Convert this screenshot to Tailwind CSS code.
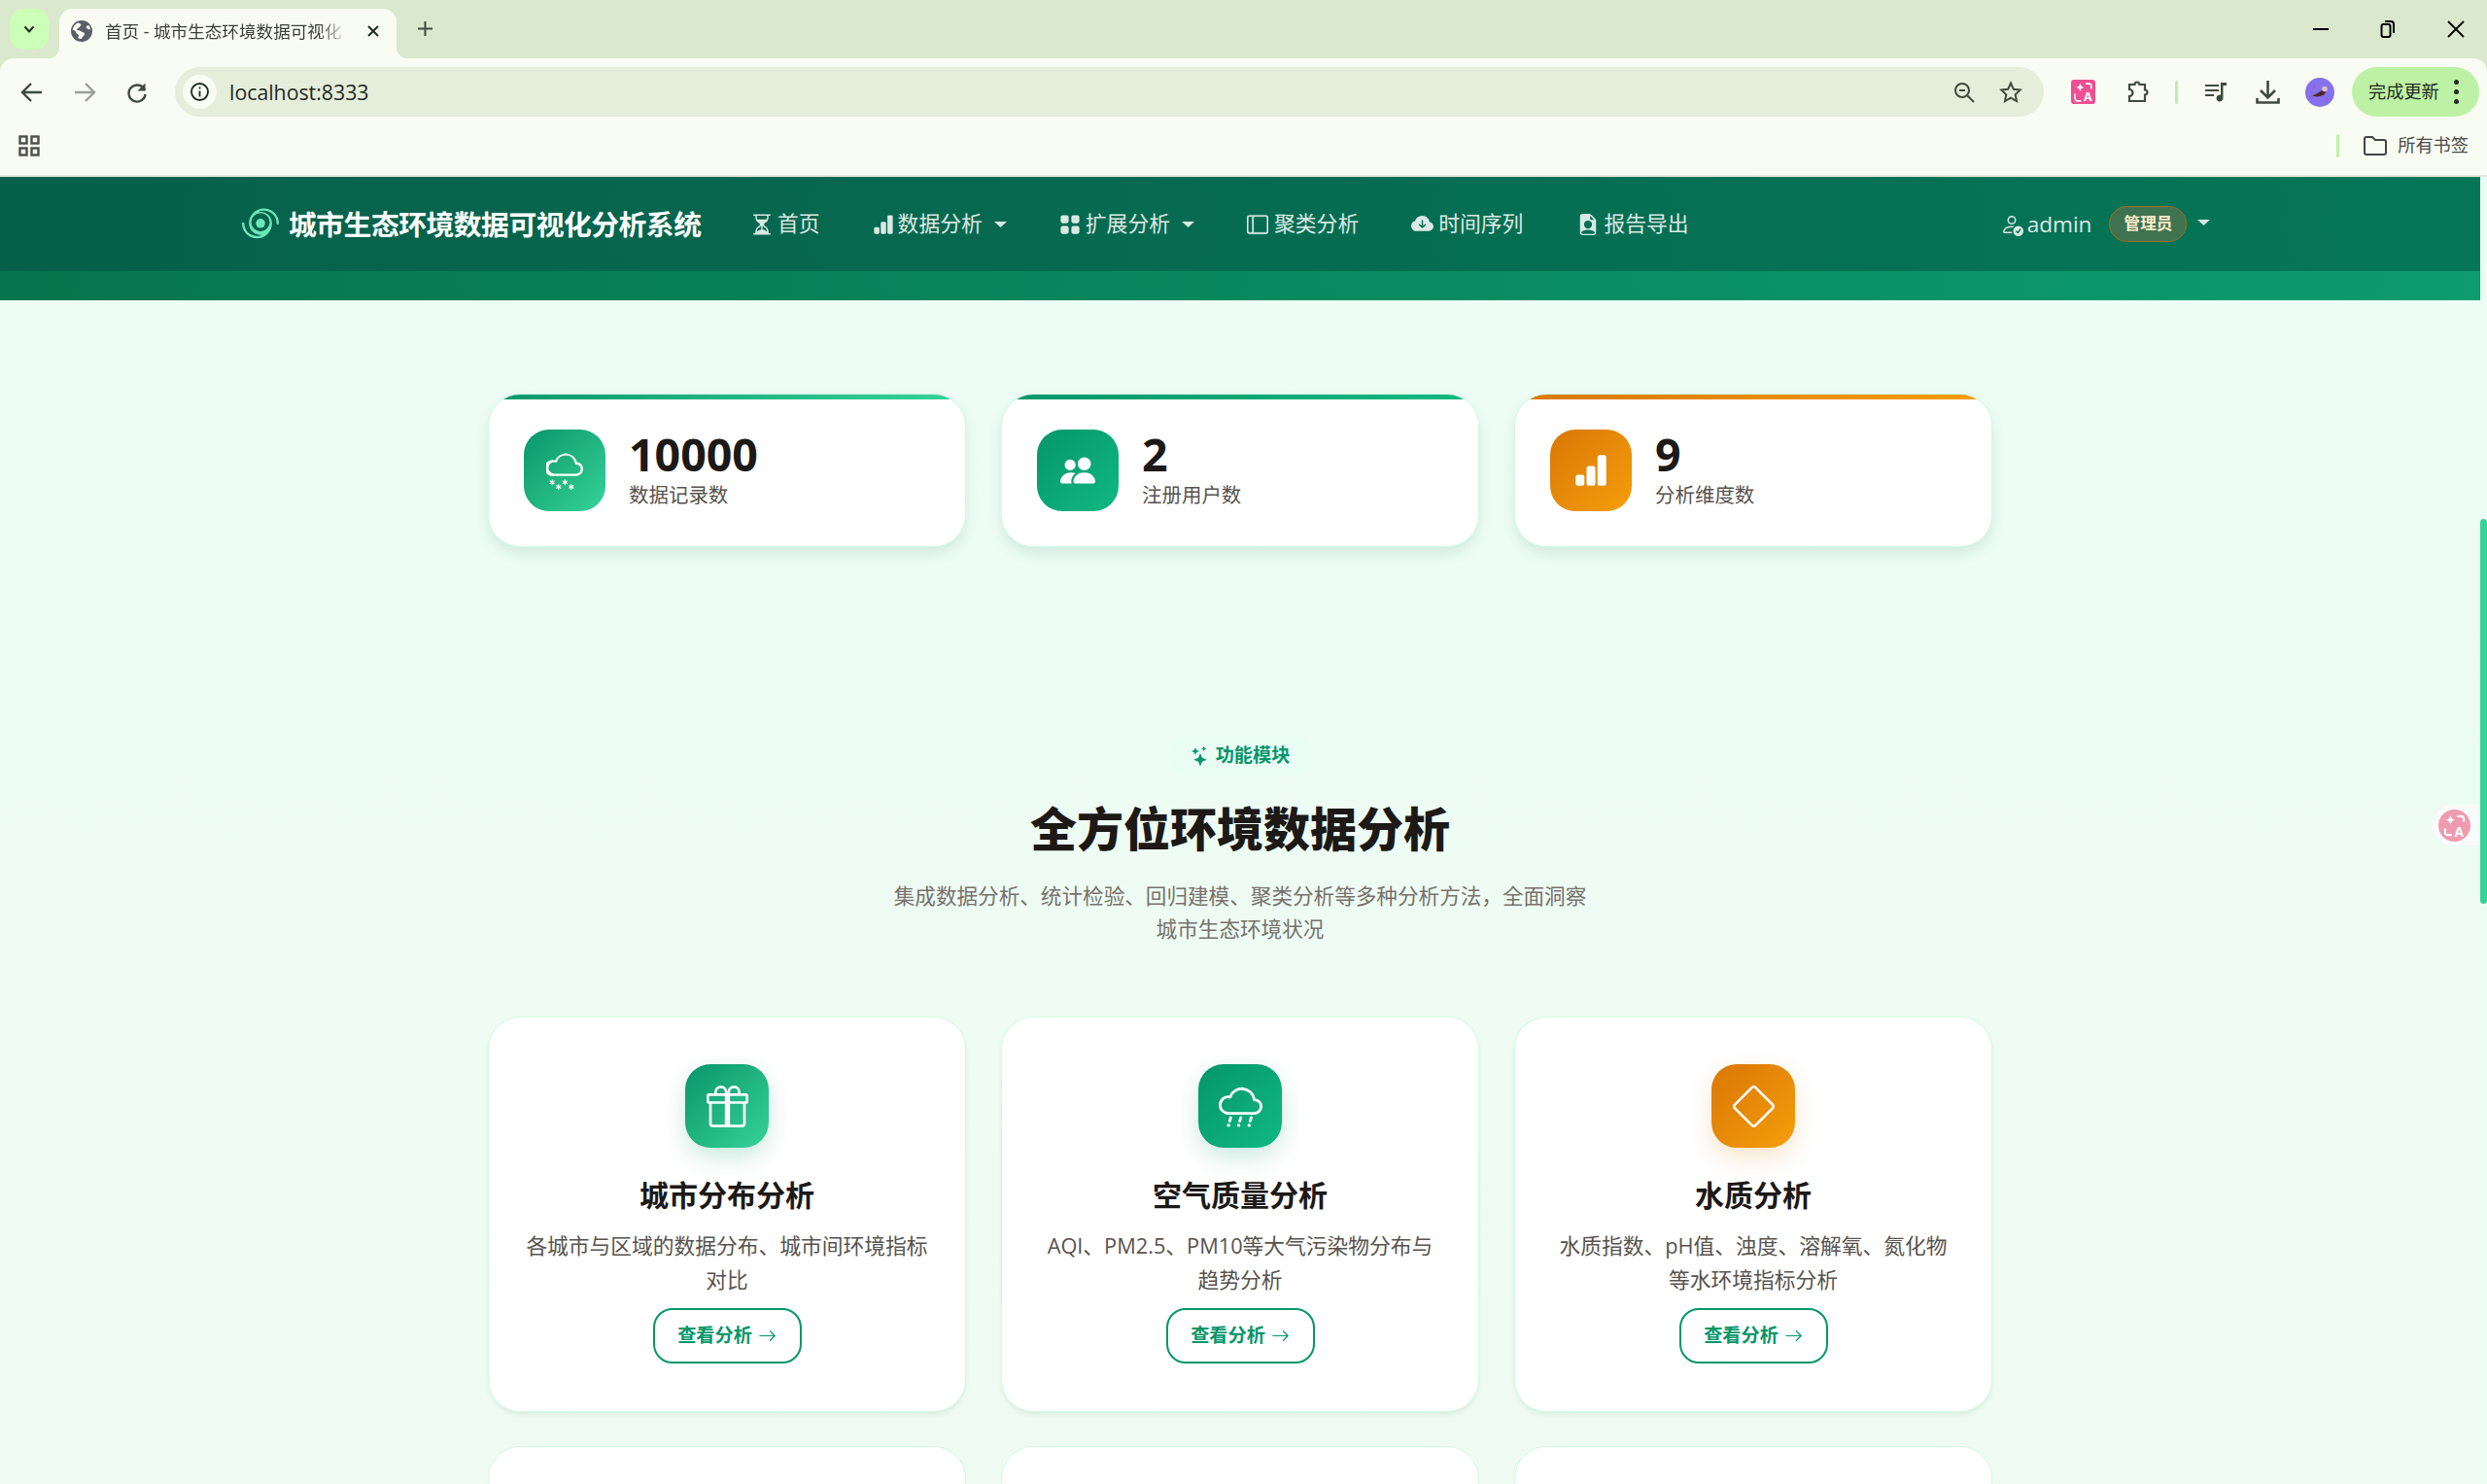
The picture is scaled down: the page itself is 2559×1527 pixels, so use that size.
<!DOCTYPE html>
<html lang="zh-CN">

<head>
    <meta charset="UTF-8" />
    <title>首页 - 城市生态环境数据可视化分析系统</title>
    <script src="https://cdn.jsdelivr.net/npm/@tailwindcss/browser@4"></script>
</head>

<body class="h-screen overflow-hidden bg-[#dae8cd] font-['Open_Sans','Noto_Sans_CJK_SC',sans-serif]">
    <!-- tab strip -->
    <div class="h-[60px] bg-[#dae8cd] flex items-start pl-[10px] pr-[23px]">
        <div class="mt-[9px] w-[40px] h-[42px] rounded-[14px] bg-[#ccffb8] flex items-center justify-center">
            <svg class="w-[14px] h-[14px]" viewBox="0 0 14 14" fill="none" stroke="#1f2a1e" stroke-width="2"><path d="M2.500 4.500 7 9.500l4.500-5" /></svg>
        </div>
        <div class="relative mt-[9px] ml-[11px] w-[347px] h-[51px] rounded-t-[14px] bg-[#f8fcf2] flex items-center pl-[12px] pb-[6px]">
            <div class="absolute bottom-0 -left-[12px] w-[12px] h-[12px] bg-[radial-gradient(circle_at_0_0,transparent_12px,#f8fcf2_12.500px)]"></div>
            <div class="absolute bottom-0 -right-[12px] w-[12px] h-[12px] bg-[radial-gradient(circle_at_100%_0,transparent_12px,#f8fcf2_12.500px)]"></div>
            <svg class="w-[22px] h-[22px]" viewBox="0 0 16 16" fill="#5a5f68"><path d="M0 8a8 8 0 1 1 16 0A8 8 0 0 1 0 8m5.500-6.300C3.300 2.600 1.700 4.600 1.200 7c1 .1 1.700.6 2.300 1.300.5.6.4 1.400 1.200 1.700.9.300 1.200 1 1 1.900l-.4 1.400c.8.400 1.700.6 2.700.6l.5-1.300c.4-.9 1.600-1.200 1.800-2.300.2-1-.9-1.500-1.800-1.600-1-.1-1.400-1-2.300-1.200-.7-.1-1.500.3-1.700-.6-.2-.8.7-1 1.300-1.300.8-.4.800-1.300 1.500-1.700.6-.4.300-1.200-.5-1.600-.4-.1-.6-.2-.8-.3m7.300 1.700c-.7.300-1.600.3-1.800 1.100-.2.700.5 1.100 1 1.500.7.400 1.300.2 1.800.600.3-1.200-.2-2.400-1-3.200" /></svg>
            <div class="ml-[13px] w-[250px] whitespace-nowrap text-[17.600px] leading-[24px] text-[#3a3f3a] [mask-image:linear-gradient(to_right,black_88%,transparent)]">首页 - 城市生态环境数据可视化</div>
            <svg class="ml-[19px] w-[14px] h-[14px]" viewBox="0 0 14 14" stroke="#1f2a1e" stroke-width="2"><path d="M2 2l10 10M12 2 2 12" /></svg>
        </div>
        <svg class="mt-[21px] ml-[21px] w-[17px] h-[17px]" viewBox="0 0 17 17" stroke="#3f4a3c" stroke-width="2"><path d="M8.500 1v15M1 8.500h15" /></svg>
        <div class="ml-auto mt-[20px] flex items-center gap-[53px]">
            <div class="w-[16px] h-[2px] bg-black"></div>
            <svg class="w-[16px] h-[20px]" viewBox="0 0 16 20" fill="none" stroke="black" stroke-width="2"><rect x="1.500" y="5" width="9" height="13" rx="2" /><path d="M5 2h6a3 3 0 0 1 3 3v9" /></svg>
            <svg class="w-[18px] h-[18px]" viewBox="0 0 18 18" stroke="black" stroke-width="1.800"><path d="M1 1l16 16M17 1 1 17" /></svg>
        </div>
    </div>

    <!-- toolbar -->
    <div class="h-[60px] pt-[9px] rounded-t-[14px] bg-[#f8fcf2] flex items-center pl-[19px] pr-[8px]">
        <svg class="w-[28px] h-[28px] shrink-0" viewBox="0 0 28 28" fill="none" stroke="#3f4a3c" stroke-width="2.400"><path d="M24 14H5M13 5l-9 9 9 9" /></svg>
        <svg class="ml-[26px] w-[28px] h-[28px] shrink-0" viewBox="0 0 28 28" fill="none" stroke="#9ba198" stroke-width="2.400"><path d="M4 14h19M15 5l9 9-9 9" /></svg>
        <svg class="ml-[26px] w-[28px] h-[28px] shrink-0" viewBox="0 0 28 28" fill="none" stroke="#3f4a3c" stroke-width="2.400"><path d="M22 12A8.500 8.500 0 1 0 22.500 16" /><path d="M22.500 4.500v8h-8z" stroke-width="0" fill="#3f4a3c" /></svg>
        <div class="ml-[25px] w-[1923px] h-[51px] shrink-0 rounded-full bg-[#e5eddb] flex items-center pl-[8px]">
            <div class="w-[35px] h-[35px] rounded-full bg-[#f8fcf2] flex items-center justify-center">
                <svg class="w-[21px] h-[21px]" viewBox="0 0 21 21" fill="none" stroke="#1f2a1e" stroke-width="1.800"><circle cx="10.500" cy="10.500" r="8.500" /><path d="M10.500 9.500v6M10.500 5.500v2" /></svg>
            </div>
            <span class="ml-[13px] text-[21.300px] text-[#1f2a1e]">localhost:8333</span>
            <svg class="ml-auto w-[24px] h-[24px]" viewBox="0 0 24 24" fill="none" stroke="#3f4a3c" stroke-width="2"><circle cx="10" cy="10" r="7" /><path d="M15 15l7 7M7 10h6" /></svg>
            <svg class="ml-[24px] mr-[22px] w-[24px] h-[24px]" viewBox="0 0 24 24" fill="none" stroke="#3f4a3c" stroke-width="2"><path d="M12 2.500l2.900 6.300 6.800.8-5 4.700 1.300 6.800-6-3.400-6 3.400 1.300-6.800-5-4.700 6.800-.8z" /></svg>
        </div>
        <svg class="ml-[28px] w-[25px] h-[25px] shrink-0" viewBox="0 0 24 24">
            <rect width="24" height="24" rx="3" fill="#ef4f93" />
            <path d="M9 3c.5 3 1.500 4 4.500 4.500-3 .5-4 1.500-4.500 4.500-.5-3-1.500-4-4.500-4.500 3-.5 4-1.500 4.500-4.500z" fill="white" />
            <path d="M14.500 4h3a2.500 2.500 0 0 1 2.500 2.500V9M4 14v4.500A2.500 2.500 0 0 0 6.500 21H10" fill="none" stroke="white" stroke-width="1.600" />
            <text x="16.500" y="21.500" font-size="12" font-weight="700" text-anchor="middle" fill="white">A</text>
        </svg>
        <svg class="ml-[30px] w-[26px] h-[26px] shrink-0" viewBox="0 0 26 26" fill="none" stroke="#3f4a3c" stroke-width="2.200"><path d="M5 5h5.500a2.500 2.500 0 0 1 5 0H21v5.500a2.500 2.500 0 0 1 0 5V22H5v-5a3.500 3.500 0 0 0 0-7z" /></svg>
        <div class="ml-[26px] w-[3px] h-[24px] shrink-0 rounded-full bg-[#bdf0a8]"></div>
        <svg class="ml-[26px] w-[26px] h-[26px] shrink-0" viewBox="0 0 26 26" fill="#3f4a3c"><path d="M2 5h14v2H2zM2 10h14v2H2zM2 15h9v2H2z" /><path d="M18 3h6v3h-3.500v13a3.500 3.500 0 1 1-2.500-3.300z" /></svg>
        <svg class="ml-[27px] w-[27px] h-[27px] shrink-0" viewBox="0 0 27 27" fill="none" stroke="#3f4a3c" stroke-width="2.600"><path d="M13.500 2v17M6 12l7.500 7.500L21 12M2.500 20v4.500h22V20" /></svg>
        <svg class="ml-[25px] w-[30px] h-[30px] shrink-0" viewBox="0 0 30 30">
            <circle cx="15" cy="15" r="15" fill="#8670ee" />
            <path d="M7 18c3 0 7-3 10-5l4 1-1 3c-3 2-8 3-11 2z" fill="#4b2a2a" />
            <circle cx="20" cy="11.500" r="2.800" fill="#d9c2b8" />
            <path d="M9 6v6M22 20v5M6 17v5" stroke="#a05fc0" stroke-width="1.200" />
        </svg>
        <div class="ml-[18px] w-[131px] h-[51px] shrink-0 rounded-full bg-[#bdf2a6] flex items-center pl-[17px]">
            <span class="text-[18.200px] text-[#1f2a1e]">完成更新</span>
            <span class="ml-[15px] flex flex-col gap-[5px]"><i class="block w-[5px] h-[5px] rounded-full bg-[#1f2a1e]"></i><i class="block w-[5px] h-[5px] rounded-full bg-[#1f2a1e]"></i><i class="block w-[5px] h-[5px] rounded-full bg-[#1f2a1e]"></i></span>
        </div>
    </div>

    <!-- bookmarks bar -->
    <div class="h-[62px] bg-[#f8fcf2] border-b-2 border-[#e6e8dc] flex items-center pl-[19px] pr-[19px]">
        <svg class="w-[22px] h-[22px]" viewBox="0 0 22 22" fill="none" stroke="#4a4f48" stroke-width="2.400"><rect x="1.500" y="1.500" width="7" height="7" /><rect x="13.500" y="1.500" width="7" height="7" /><rect x="1.500" y="13.500" width="7" height="7" /><rect x="13.500" y="13.500" width="7" height="7" /></svg>
        <div class="ml-auto w-[3px] h-[24px] rounded-full bg-[#bdf0a8]"></div>
        <svg class="ml-[25px] w-[24px] h-[20px]" viewBox="0 0 24 20" fill="none" stroke="#444" stroke-width="2"><path d="M1 3a2 2 0 0 1 2-2h6l3 3h9a2 2 0 0 1 2 2v11a2 2 0 0 1-2 2H3a2 2 0 0 1-2-2z" /></svg>
        <span class="ml-[11px] text-[18.200px] text-[#4a4a4a]">所有书签</span>
    </div>

    <div class="h-[1345px] flex bg-[#edfcf4] relative overflow-hidden">
        <main class="w-[2552px] bg-linear-to-b from-[#ecfdf5] to-[#effbf2]">
            <!-- navbar -->
            <nav class="h-[97px] bg-linear-to-r from-[#06604a] to-[#057757] flex items-center pl-[249px] text-white/85 text-[21.800px]">
                <svg class="w-[38px] h-[38px]" viewBox="0 0 16 16" fill="#6ee7b7"><path d="M8 9.500a2 2 0 1 0 0-4 2 2 0 0 0 0 4" /><path d="M9.500 2c-.9 0-1.750.216-2.501.6A5 5 0 0 1 13 7.500a6.500 6.500 0 1 1-13 0 .5.500 0 0 1 1 0 5.500 5.500 0 0 0 8.001 4.900A5 5 0 0 1 3 7.500a6.500 6.500 0 0 1 13 0 .5.500 0 0 1-1 0A5.500 5.500 0 0 0 9.500 2M8 11a4 4 0 1 0 0-8 4 4 0 0 0 0 8" /></svg>
                <span class="ml-[10px] w-[475px] text-[28.800px] font-bold text-white tracking-[-0.500px]">城市生态环境数据可视化分析系统</span>
                <svg class="w-[24px] h-[24px]" viewBox="0 0 16 16" fill="currentColor"><path d="M2.500 15a.5.500 0 1 1 0-1h1v-1a4.500 4.500 0 0 1 2.557-4.060c.29-.139.443-.377.443-.59v-.7c0-.213-.154-.451-.443-.59A4.500 4.500 0 0 1 3.500 3V2h-1a.5.500 0 0 1 0-1h11a.5.500 0 0 1 0 1h-1v1a4.500 4.500 0 0 1-2.557 4.060c-.29.139-.443.377-.443.59v.7c0 .213.154.451.443.59A4.500 4.500 0 0 1 12.500 13v1h1a.5.500 0 0 1 0 1zm2-13v1c0 .537.12 1.045.337 1.500h6.326c.216-.455.337-.963.337-1.500V2zm3 6.350c0 .701-.478 1.236-1.011 1.492A3.500 3.500 0 0 0 4.500 13s.866-1.299 3-1.480zm1 0v3.170c2.134.181 3 1.480 3 1.480a3.500 3.500 0 0 0-1.989-3.158C8.978 9.586 8.500 9.052 8.500 8.351z" /></svg>
                <span class="ml-[4px]">首页</span>
                <svg class="ml-[54px] w-[22px] h-[22px]" viewBox="0 0 16 16" fill="currentColor"><path d="M1 11a1 1 0 0 1 1-1h2a1 1 0 0 1 1 1v3a1 1 0 0 1-1 1H2a1 1 0 0 1-1-1zm5-4a1 1 0 0 1 1-1h2a1 1 0 0 1 1 1v7a1 1 0 0 1-1 1H7a1 1 0 0 1-1-1zm5-5a1 1 0 0 1 1-1h2a1 1 0 0 1 1 1v12a1 1 0 0 1-1 1h-2a1 1 0 0 1-1-1z" /></svg>
                <span class="ml-[4px]">数据分析</span>
                <svg class="ml-[12px] w-[13px] h-[6px]" viewBox="0 0 13 6" fill="currentColor"><path d="M0 0h13L6.500 6z" /></svg>
                <svg class="ml-[54px] w-[22px] h-[22px]" viewBox="0 0 16 16" fill="currentColor"><path d="M1 2.500A1.500 1.500 0 0 1 2.500 1h3A1.500 1.500 0 0 1 7 2.500v3A1.500 1.500 0 0 1 5.500 7h-3A1.500 1.500 0 0 1 1 5.500zm8 0A1.500 1.500 0 0 1 10.500 1h3A1.500 1.500 0 0 1 15 2.500v3A1.500 1.500 0 0 1 13.500 7h-3A1.500 1.500 0 0 1 9 5.500zm-8 8A1.500 1.500 0 0 1 2.500 9h3A1.500 1.500 0 0 1 7 10.500v3A1.500 1.500 0 0 1 5.500 15h-3A1.500 1.500 0 0 1 1 13.500zm8 0A1.500 1.500 0 0 1 10.500 9h3a1.500 1.500 0 0 1 1.500 1.500v3a1.500 1.500 0 0 1-1.500 1.500h-3A1.500 1.500 0 0 1 9 13.500z" /></svg>
                <span class="ml-[5px]">扩展分析</span>
                <svg class="ml-[12px] w-[13px] h-[6px]" viewBox="0 0 13 6" fill="currentColor"><path d="M0 0h13L6.500 6z" /></svg>
                <svg class="ml-[54px] w-[22px] h-[22px]" viewBox="0 0 16 16" fill="currentColor" stroke="currentColor" stroke-width="0.250"><path d="M0 3a2 2 0 0 1 2-2h12a2 2 0 0 1 2 2v10a2 2 0 0 1-2 2H2a2 2 0 0 1-2-2zm5-1v12h9a1 1 0 0 0 1-1V3a1 1 0 0 0-1-1zM4 2H2a1 1 0 0 0-1 1v10a1 1 0 0 0 1 1h2z" /></svg>
                <span class="ml-[6px]">聚类分析</span>
                <svg class="ml-[54px] w-[23px] h-[23px]" viewBox="0 0 16 16" fill="currentColor"><path d="M8 2a5.530 5.530 0 0 0-3.594 1.342c-.766.66-1.321 1.520-1.464 2.383C1.266 6.095 0 7.555 0 9.318 0 11.366 1.708 13 3.781 13h8.906C14.502 13 16 11.570 16 9.773c0-1.636-1.242-2.969-2.834-3.194C12.923 3.999 10.690 2 8 2m2.354 6.854-2 2a.5.500 0 0 1-.708 0l-2-2a.5.500 0 1 1 .708-.708L7.500 9.293V5.500a.5.500 0 0 1 1 0v3.793l1.146-1.147a.5.500 0 0 1 .708.708" /></svg>
                <span class="ml-[5px]">时间序列</span>
                <svg class="ml-[56px] w-[22px] h-[22px]" viewBox="0 0 16 16" fill="currentColor"><path d="M9.293 0H4a2 2 0 0 0-2 2v12a2 2 0 0 0 2 2h8a2 2 0 0 0 2-2V4.707A1 1 0 0 0 13.707 4L10 .293A1 1 0 0 0 9.293 0M9.500 3.500v-2l3 3h-2a1 1 0 0 1-1-1M11 8a3 3 0 1 1-6 0 3 3 0 0 1 6 0m2 5.755V14a1 1 0 0 1-1 1H4a1 1 0 0 1-1-1v-.245S4 12 8 12s5 1.755 5 1.755" /></svg>
                <span class="ml-[5px]">报告导出</span>
                <svg class="ml-[320px] w-[24px] h-[24px]" viewBox="0 0 16 16" fill="currentColor"><path d="M12.500 16a3.500 3.500 0 1 0 0-7 3.500 3.500 0 0 0 0 7m1.679-4.493-1.335 2.226a.75.75 0 0 1-1.174.144l-.774-.773a.5.500 0 0 1 .708-.708l.547.548 1.170-1.951a.5.500 0 1 1 .858.514M11 5a3 3 0 1 1-6 0 3 3 0 0 1 6 0M8 7a2 2 0 1 0 0-4 2 2 0 0 0 0 4" /><path d="M8.256 14a4.500 4.500 0 0 1-.229-1.004H3c.001-.246.154-.986.832-1.664C4.484 10.680 5.711 10 8 10q.39 0 .74.025c.226-.341.496-.65.804-.918Q8.844 9.002 8 9c-5 0-6 3-6 4s1 1 1 1z" /></svg>
                <span class="ml-[4px] text-[22.600px]">admin</span>
                <span class="ml-[18px] w-[80px] h-[37px] rounded-full bg-[#3f7350] border border-[#a86b20] flex items-center justify-center text-[16.600px] font-bold text-[#fdeccb]">管理员</span>
                <svg class="ml-[11px] -mt-[3px] w-[13px] h-[6px]" viewBox="0 0 13 6" fill="currentColor"><path d="M0 0h13L6.500 6z" /></svg>
            </nav>
            <div class="h-[30px] bg-linear-to-r from-[#06754f] to-[#0c9c6e]"></div>

            <div class="w-[1546px] mx-auto">
                <!-- stats -->
                <div class="mt-[97px] grid grid-cols-3 gap-[38px]">
                    <div class="h-[156px] rounded-[32px] bg-white shadow-[0_0_0_1px_#d1fae5,0_7px_14px_rgba(6,95,70,0.12)] overflow-hidden">
                        <div class="h-[5px] bg-linear-to-r from-[#059669] to-[#34d399]"></div>
                        <div class="flex items-center pl-[36px] pt-[31px]">
                            <div class="w-[84px] h-[84px] rounded-[26px] bg-linear-to-br from-[#059669] to-[#34d399] flex items-center justify-center">
                                <svg class="mt-[2px] w-[38px] h-[38px]" viewBox="0 0 16 16" fill="white"><path d="M13.405 4.277a5.001 5.001 0 0 0-9.499-1.004A3.500 3.500 0 1 0 3.500 10H13a3 3 0 0 0 .405-5.973M8.500 1a4 4 0 0 1 3.976 3.555.5.500 0 0 0 .5.445H13a2 2 0 0 1 0 4H3.500a2.500 2.500 0 1 1 .605-4.926.5.500 0 0 0 .596-.329A4 4 0 0 1 8.500 1M2.625 11.500a.25.25 0 0 1 .25.25v.57l.501-.287a.25.25 0 0 1 .248.434l-.495.283.495.283a.25.25 0 0 1-.248.434l-.501-.286v.569a.25.25 0 1 1-.5 0v-.57l-.501.287a.25.25 0 0 1-.248-.434l.495-.283-.495-.283a.25.25 0 0 1 .248-.434l.501.286v-.569a.25.25 0 0 1 .25-.25m2.750 2a.25.25 0 0 1 .25.25v.57l.501-.287a.25.25 0 0 1 .248.434l-.495.283.495.283a.25.25 0 0 1-.248.434l-.501-.286v.569a.25.25 0 1 1-.5 0v-.57l-.501.287a.25.25 0 0 1-.248-.434l.495-.283-.495-.283a.25.25 0 0 1 .248-.434l.501.286v-.569a.25.25 0 0 1 .25-.25m5.500 0a.25.25 0 0 1 .25.25v.57l.5-.287a.25.25 0 0 1 .25.434l-.496.283.495.283a.25.25 0 0 1-.248.434l-.5-.286v.569a.25.25 0 0 1-.5 0v-.57l-.502.287a.25.25 0 0 1-.248-.434l.495-.283-.495-.283a.25.25 0 0 1 .248-.434l.501.286v-.569a.25.25 0 0 1 .25-.25m-2.750-2a.25.25 0 0 1 .25.25v.57l.501-.287a.25.25 0 0 1 .248.434l-.495.283.495.283a.25.25 0 0 1-.248.434l-.501-.286v.569a.25.25 0 1 1-.5 0v-.57l-.501.287a.25.25 0 0 1-.248-.434l.495-.283-.495-.283a.25.25 0 0 1 .248-.434l.501.286v-.569a.25.25 0 0 1 .25-.25" /></svg>
                            </div>
                            <div class="ml-[24px]">
                                <div class="-mt-[3px] text-[46.500px] leading-[50px] font-bold text-[#1c1917]">10000</div>
                                <div class="text-[20.480px] leading-[28px] mt-[3px] text-[#57534e]">数据记录数</div>
                            </div>
                        </div>
                    </div>
                    <div class="h-[156px] rounded-[32px] bg-white shadow-[0_0_0_1px_#d1fae5,0_7px_14px_rgba(6,95,70,0.12)] overflow-hidden">
                        <div class="h-[5px] bg-linear-to-r from-[#059669] to-[#10b981]"></div>
                        <div class="flex items-center pl-[36px] pt-[31px]">
                            <div class="w-[84px] h-[84px] rounded-[26px] bg-linear-to-br from-[#059669] to-[#10b981] flex items-center justify-center">
                                <svg class="w-[36px] h-[36px]" viewBox="0 0 16 16" fill="white"><path d="M7 14s-1 0-1-1 1-4 5-4 5 3 5 4-1 1-1 1zm4-6a3 3 0 1 0 0-6 3 3 0 0 0 0 6m-5.784 6A2.240 2.240 0 0 1 5 13c0-1.355.68-2.750 1.936-3.720A6.300 6.300 0 0 0 5 9c-4 0-5 3-5 4s1 1 1 1zM4.500 8a2.500 2.500 0 1 0 0-5 2.500 2.500 0 0 0 0 5" /></svg>
                            </div>
                            <div class="ml-[24px]">
                                <div class="-mt-[3px] text-[46.500px] leading-[50px] font-bold text-[#1c1917]">2</div>
                                <div class="text-[20.480px] leading-[28px] mt-[3px] text-[#57534e]">注册用户数</div>
                            </div>
                        </div>
                    </div>
                    <div class="h-[156px] rounded-[32px] bg-white shadow-[0_0_0_1px_#d1fae5,0_7px_14px_rgba(6,95,70,0.12)] overflow-hidden">
                        <div class="h-[5px] bg-linear-to-r from-[#d97706] to-[#f59e0b]"></div>
                        <div class="flex items-center pl-[36px] pt-[31px]">
                            <div class="w-[84px] h-[84px] rounded-[26px] bg-linear-to-br from-[#d97706] to-[#f59e0b] flex items-center justify-center">
                                <svg class="w-[36px] h-[36px]" viewBox="0 0 16 16" fill="white"><path d="M1 11a1 1 0 0 1 1-1h2a1 1 0 0 1 1 1v3a1 1 0 0 1-1 1H2a1 1 0 0 1-1-1zm5-4a1 1 0 0 1 1-1h2a1 1 0 0 1 1 1v7a1 1 0 0 1-1 1H7a1 1 0 0 1-1-1zm5-5a1 1 0 0 1 1-1h2a1 1 0 0 1 1 1v12a1 1 0 0 1-1 1h-2a1 1 0 0 1-1-1z" /></svg>
                            </div>
                            <div class="ml-[24px]">
                                <div class="-mt-[3px] text-[46.500px] leading-[50px] font-bold text-[#1c1917]">9</div>
                                <div class="text-[20.480px] leading-[28px] mt-[3px] text-[#57534e]">分析维度数</div>
                            </div>
                        </div>
                    </div>
                </div>

                <!-- section header -->
                <div class="mt-[195px] flex flex-col items-center">
                    <div class="h-[41px] w-[149px] rounded-full bg-[#e9fdf5] flex items-center justify-center gap-[6px]">
                        <svg class="w-[20px] h-[20px]" viewBox="0 0 16 16" fill="#059669"><path d="M7.657 6.247c.11-.33.576-.33.686 0l.645 1.937a2.890 2.890 0 0 0 1.829 1.828l1.936.645c.33.11.33.576 0 .686l-1.937.645a2.890 2.890 0 0 0-1.828 1.829l-.645 1.936a.361.361 0 0 1-.686 0l-.645-1.937a2.890 2.890 0 0 0-1.828-1.828l-1.937-.645a.361.361 0 0 1 0-.686l1.937-.645a2.890 2.890 0 0 0 1.828-1.828zM3.794 1.148a.217.217 0 0 1 .412 0l.387 1.162c.173.518.579.924 1.097 1.097l1.162.387a.217.217 0 0 1 0 .412l-1.162.387A1.730 1.730 0 0 0 4.593 5.690l-.387 1.162a.217.217 0 0 1-.412 0L3.407 5.690A1.730 1.730 0 0 0 2.310 4.593l-1.162-.387a.217.217 0 0 1 0-.412l1.162-.387A1.730 1.730 0 0 0 3.407 2.310zM10.863.099a.145.145 0 0 1 .274 0l.258.774c.115.346.386.617.732.732l.774.258a.145.145 0 0 1 0 .274l-.774.258a1.160 1.160 0 0 0-.732.732l-.258.774a.145.145 0 0 1-.274 0l-.258-.774a1.160 1.160 0 0 0-.732-.732L9.100 2.137a.145.145 0 0 1 0-.274l.774-.258c.346-.115.617-.386.732-.732z" /></svg>
                        <span class="text-[19.200px] font-bold text-[#059669]">功能模块</span>
                    </div>
                    <h2 class="mt-[25px] text-[48px] leading-[60px] font-extrabold text-[#1c1917]">全方位环境数据分析</h2>
                    <p class="mt-[22px] w-[730px] text-center text-[21.600px] leading-[34px] text-[#78716c]">集成数据分析、统计检验、回归建模、聚类分析等多种分析方法，全面洞察城市生态环境状况</p>
                </div>

                <!-- feature cards -->
                <div class="mt-[74px] grid grid-cols-3 gap-[37px_38px]">
                    <div class="h-[405px] rounded-[32px] bg-white shadow-[0_0_0_1px_#d1fae5,0_3px_5px_rgba(6,95,70,0.10)] px-[38px] pt-[48px] flex flex-col items-center">
                        <div class="w-[86px] h-[86px] rounded-[26px] bg-linear-to-br from-[#059669] to-[#34d399] shadow-[0_10px_24px_rgba(5,150,105,0.20)] flex items-center justify-center">
                            <svg class="w-[43px] h-[43px]" viewBox="0 0 16 16" fill="white"><path d="M3 2.500a2.500 2.500 0 0 1 5 0 2.500 2.500 0 0 1 5 0v.006c0 .07 0 .27-.038.494H15a1 1 0 0 1 1 1v2a1 1 0 0 1-1 1v7.500a1.500 1.500 0 0 1-1.500 1.500h-11A1.500 1.500 0 0 1 1 14.500V7a1 1 0 0 1-1-1V4a1 1 0 0 1 1-1h2.038A3 3 0 0 1 3 2.506zm1.068.5H7v-.5a1.500 1.500 0 1 0-3 0c0 .085.002.274.045.43zM9 3h2.932l.023-.07c.043-.156.045-.345.045-.43a1.500 1.500 0 0 0-3 0zM1 4v2h6V4zm8 0v2h6V4zm5 3H9v8h4.500a.5.500 0 0 0 .5-.5zm-7 8V7H2v7.500a.5.500 0 0 0 .5.5z" /></svg>
                        </div>
                        <h3 class="mt-[29px] text-[30px] leading-[40px] font-bold text-[#1c1917]">城市分布分析</h3>
                        <p class="mt-[14px] text-center text-[21.760px] leading-[35px] text-[#57534e]">各城市与区域的数据分布、城市间环境指标对比</p>
                        <a class="mt-[12px] w-[153px] h-[57px] rounded-[20px] border-2 border-[#059669] flex items-center justify-center gap-[6px] text-[19.200px] font-bold text-[#059669]">查看分析<svg class="w-[19px] h-[19px]" viewBox="0 0 16 16" fill="currentColor"><path d="M1 8a.5.500 0 0 1 .5-.5h11.793l-3.147-3.146a.5.500 0 0 1 .708-.708l4 4a.5.500 0 0 1 0 .708l-4 4a.5.500 0 0 1-.708-.708L13.293 8.500H1.500A.5.500 0 0 1 1 8" /></svg></a>
                    </div>
                    <div class="h-[405px] rounded-[32px] bg-white shadow-[0_0_0_1px_#d1fae5,0_3px_5px_rgba(6,95,70,0.10)] px-[38px] pt-[48px] flex flex-col items-center">
                        <div class="w-[86px] h-[86px] rounded-[26px] bg-linear-to-br from-[#059669] to-[#10b981] shadow-[0_10px_24px_rgba(5,150,105,0.20)] flex items-center justify-center">
                            <svg class="w-[45px] h-[45px]" viewBox="0 0 16 16" fill="white">
                                <path d="M13.405 5.027a5.001 5.001 0 0 0-9.499-1.004A3.500 3.500 0 1 0 3.500 11H13a3 3 0 0 0 .405-5.973M8.500 2a4 4 0 0 1 3.976 3.555.5.500 0 0 0 .5.445H13a2 2 0 0 1 0 4H3.500a2.500 2.500 0 1 1 .605-4.926.5.500 0 0 0 .596-.329A4 4 0 0 1 8.500 2" />
                                <path d="M4.400 12.100 4 13.400M8.100 12.100 7.700 13.400M11.900 12.100 11.500 13.400" stroke="white" stroke-width="1" stroke-linecap="round" />
                                <circle cx="3.600" cy="14.900" r=".6" /><circle cx="7.300" cy="14.900" r=".6" /><circle cx="11.100" cy="14.900" r=".6" />
                            </svg>
                        </div>
                        <h3 class="mt-[29px] text-[30px] leading-[40px] font-bold text-[#1c1917]">空气质量分析</h3>
                        <p class="mt-[14px] text-center text-[21.760px] leading-[35px] text-[#57534e]">AQI、PM2.5、PM10等大气污染物分布与趋势分析</p>
                        <a class="mt-[12px] w-[153px] h-[57px] rounded-[20px] border-2 border-[#059669] flex items-center justify-center gap-[6px] text-[19.200px] font-bold text-[#059669]">查看分析<svg class="w-[19px] h-[19px]" viewBox="0 0 16 16" fill="currentColor"><path d="M1 8a.5.500 0 0 1 .5-.5h11.793l-3.147-3.146a.5.500 0 0 1 .708-.708l4 4a.5.500 0 0 1 0 .708l-4 4a.5.500 0 0 1-.708-.708L13.293 8.500H1.500A.5.500 0 0 1 1 8" /></svg></a>
                    </div>
                    <div class="h-[405px] rounded-[32px] bg-white shadow-[0_0_0_1px_#d1fae5,0_3px_5px_rgba(6,95,70,0.10)] px-[38px] pt-[48px] flex flex-col items-center">
                        <div class="w-[86px] h-[86px] rounded-[26px] bg-linear-to-br from-[#d97706] to-[#f59e0b] shadow-[0_10px_24px_rgba(217,119,6,0.20)] flex items-center justify-center">
                            <svg class="w-[43px] h-[43px]" viewBox="0 0 16 16" fill="white"><path d="M6.950.435c.58-.58 1.520-.58 2.100 0l6.515 6.516c.58.58.58 1.519 0 2.098L9.050 15.565c-.58.58-1.519.58-2.098 0L.435 9.050a1.480 1.480 0 0 1 0-2.098zm1.400.7a.5.500 0 0 0-.7 0L1.134 7.650a.5.500 0 0 0 0 .7l6.516 6.516a.5.500 0 0 0 .7 0l6.516-6.516a.5.500 0 0 0 0-.7L8.350 1.134z" /></svg>
                        </div>
                        <h3 class="mt-[29px] text-[30px] leading-[40px] font-bold text-[#1c1917]">水质分析</h3>
                        <p class="mt-[14px] text-center text-[21.760px] leading-[35px] text-[#57534e]">水质指数、pH值、浊度、溶解氧、氮化物等水环境指标分析</p>
                        <a class="mt-[12px] w-[153px] h-[57px] rounded-[20px] border-2 border-[#059669] flex items-center justify-center gap-[6px] text-[19.200px] font-bold text-[#059669]">查看分析<svg class="w-[19px] h-[19px]" viewBox="0 0 16 16" fill="currentColor"><path d="M1 8a.5.500 0 0 1 .5-.5h11.793l-3.147-3.146a.5.500 0 0 1 .708-.708l4 4a.5.500 0 0 1 0 .708l-4 4a.5.500 0 0 1-.708-.708L13.293 8.500H1.500A.5.500 0 0 1 1 8" /></svg></a>
                    </div>
                    <div class="h-[405px] rounded-[32px] bg-white shadow-[0_0_0_1px_#d1fae5]"></div>
                    <div class="h-[405px] rounded-[32px] bg-white shadow-[0_0_0_1px_#d1fae5]"></div>
                    <div class="h-[405px] rounded-[32px] bg-white shadow-[0_0_0_1px_#d1fae5]"></div>
                </div>
            </div>
        </main>

        <!-- scrollbar -->
        <div class="w-[7px] pt-[352px]">
            <div class="h-[396px] rounded-full bg-[#34d399]"></div>
        </div>

        <!-- floating translate button -->
        <div class="absolute top-[646px] right-[7px] w-[49px] h-[42px] rounded-l-full bg-[#f9fbfa] flex items-center pl-[6px]">
            <svg class="w-[33px] h-[33px]" viewBox="0 0 24 24">
                <circle cx="12" cy="12" r="12" fill="#f09ab0" />
                <path d="M9 4c.4 2.500 1.300 3.400 3.800 3.800-2.500.4-3.400 1.300-3.800 3.800-.4-2.500-1.300-3.400-3.800-3.800 2.500-.4 3.400-1.300 3.800-3.800z" fill="white" />
                <path d="M14 5h3a2 2 0 0 1 2 2v2M5 14v3a2 2 0 0 0 2 2h3" fill="none" stroke="white" stroke-width="1.500" />
                <text x="15.500" y="20" font-size="10" font-weight="700" text-anchor="middle" fill="white">A</text>
            </svg>
        </div>
    </div>
</body>

</html>
